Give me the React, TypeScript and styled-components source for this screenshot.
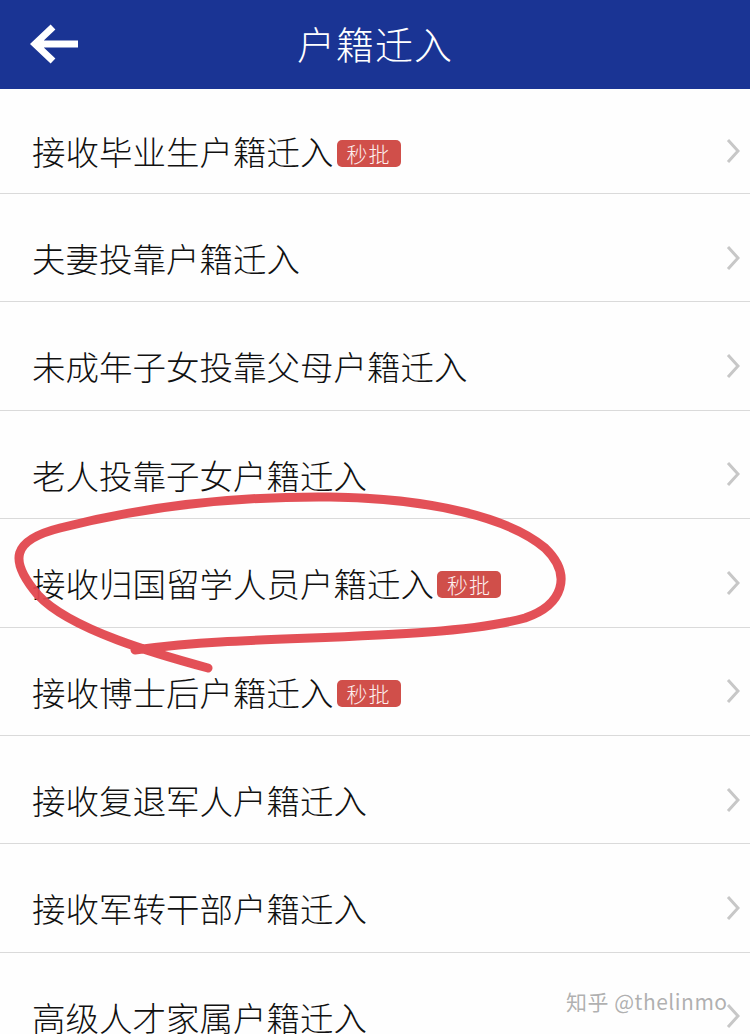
import React from "react";
import styled, { createGlobalStyle } from "styled-components";

const Global = createGlobalStyle`
  html, body { margin: 0; padding: 0; background: #fefefe; }
  body { font-family: "Noto Sans CJK SC", "Noto Sans", sans-serif; overflow: hidden; }
`;

const Page = styled.div`
  position: relative;
  width: 750px;
  height: 1034px;
  overflow: hidden;
  background: #fefefe;
`;

const Header = styled.header`
  height: 89px;
  background: #1a3494;
  display: grid;
  grid-template-columns: 100px 1fr 100px;
  align-items: center;
`;

const BackButton = styled.div`
  padding-left: 30px;
  display: flex;
  align-items: center;
  height: 100%;
  padding-bottom: 2px;
`;

const Title = styled.h1`
  margin: 0;
  text-align: center;
  color: #ffffff;
  font-size: 38px;
  font-weight: 300;
  letter-spacing: 1px;
  line-height: 1;
  padding-bottom: 3px;
`;

const List = styled.ul`
  list-style: none;
  margin: 0;
  padding: 0;
`;

const Row = styled.li<{ $first?: boolean }>`
  box-sizing: border-box;
  height: ${(p) => (p.$first ? "105px" : "108.4px")};
  border-bottom: 1px solid #dadada;
  display: flex;
  align-items: center;
  padding: 20px 10px 0 32px;
`;

const Label = styled.span`
  flex: 1;
  display: flex;
  align-items: center;
  font-size: 33.5px;
  color: #111111;
  line-height: 1;
  font-weight: 300;
`;

const Badge = styled.span`
  display: inline-flex;
  align-items: center;
  justify-content: center;
  margin-left: 3px;
  margin-top: 4px;
  width: 64px;
  height: 27px;
  border-radius: 5px;
  background: #d04f4a;
  color: #fdf0ef;
  font-size: 21px;
  font-weight: 300;
  letter-spacing: 1px;
  line-height: 1;
`;

const Chevron = styled.svg`
  flex: none;
  width: 14px;
  height: 26px;
`;

const Scribble = styled.svg`
  position: absolute;
  left: 0;
  top: 0;
  pointer-events: none;
`;

const Watermark = styled.div`
  position: absolute;
  left: 566px;
  top: 986px;
  font-family: "Noto Sans CJK SC", "Liberation Sans", sans-serif;
  font-size: 21px;
  color: rgba(150, 150, 150, 0.75);
  text-shadow: 0 0 2px rgba(255, 255, 255, 0.9);
  letter-spacing: 0.5px;
  white-space: nowrap;
`;

const items: { text: string; fast?: boolean }[] = [
  { text: "接收毕业生户籍迁入", fast: true },
  { text: "夫妻投靠户籍迁入" },
  { text: "未成年子女投靠父母户籍迁入" },
  { text: "老人投靠子女户籍迁入" },
  { text: "接收归国留学人员户籍迁入", fast: true },
  { text: "接收博士后户籍迁入", fast: true },
  { text: "接收复退军人户籍迁入" },
  { text: "接收军转干部户籍迁入" },
  { text: "高级人才家属户籍迁入" },
];

export default function App() {
  return (
    <>
      <Global />
      <Page>
        <Header>
          <BackButton>
            <svg width="50" height="44" viewBox="0 0 50 44">
              <path
                d="M23 5 L5 22 L23 39 M5 22 H48"
                fill="none"
                stroke="#ffffff"
                strokeWidth="7"
                strokeLinejoin="miter"
              />
            </svg>
          </BackButton>
          <Title>户籍迁入</Title>
          <div />
        </Header>
        <List>
          {items.map((it, i) => (
            <Row key={i} $first={i === 0}>
              <Label>
                {it.text}
                {it.fast && <Badge>秒批</Badge>}
              </Label>
              <Chevron viewBox="0 0 14 26">
                <path d="M2 2 L12 13 L2 24" fill="none" stroke="#c7c7c7" strokeWidth="3" />
              </Chevron>
            </Row>
          ))}
        </List>
        <Scribble width="750" height="1034" viewBox="0 0 750 1034">
          <path
            d="M208 668 C 160 655, 70 630, 38 595 C 8 560, 12 540, 60 528 C 130 510, 220 496, 330 497 C 430 498, 510 518, 545 548 C 573 575, 563 605, 525 618 C 460 636, 330 636, 220 642 C 180 644, 150 648, 135 650"
            fill="none"
            stroke="#e2474e"
            strokeWidth="9"
            strokeLinecap="round"
            strokeLinejoin="round"
            opacity="0.95"
          />
        </Scribble>
        <Watermark>知乎 @thelinmo</Watermark>
      </Page>
    </>
  );
}
